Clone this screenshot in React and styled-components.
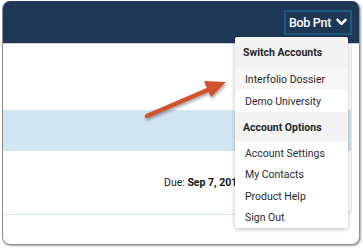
import React from "react";
import styled, { createGlobalStyle } from "styled-components";

const Global = createGlobalStyle`
  html, body { margin: 0; padding: 0; background: #ffffff; }
  body { font-family: Roboto, "Liberation Sans", Arial, sans-serif; }
`;

const Stage = styled.div`
  position: relative;
  width: 363px;
  height: 248px;
  padding: 1px 0 0 2px;
  box-sizing: border-box;
`;

const Window = styled.div`
  width: 358px;
  height: 244px;
  border-radius: 8px;
  overflow: hidden;
  background: #ffffff;
  border: 1px solid #8e8e8e;
  border-top: none;
  box-sizing: border-box;
  box-shadow: 1px 1px 2px rgba(0, 0, 0, 0.35);
  display: flex;
  flex-direction: column;
`;

const Header = styled.header`
  height: 42px;
  flex: none;
  background: #1e3757;
  border-bottom: 1px solid #c9d3dd;
  display: flex;
  align-items: center;
  justify-content: flex-end;
  padding-right: 7px;
`;

const UserButton = styled.div`
  height: 25px;
  box-sizing: border-box;
  border: 2px solid #1c5a82;
  display: flex;
  align-items: center;
  gap: 5px;
  padding: 0 3px 0 3px;
  color: #ffffff;
  font-size: 12.5px;
  font-weight: 500;
  letter-spacing: -0.3px;
`;

const Body = styled.div`
  flex: 1;
  padding: 0 7px 29px 0;
  display: flex;
  flex-direction: column;
`;

const Card = styled.div`
  flex: 1;
  margin-left: -12px;
  border: 1px solid #d6e7f3;
  border-top: none;
  border-radius: 0 0 6px 6px;
  display: flex;
  flex-direction: column;
`;

const Gap = styled.div`
  height: ${p => p.h}px;
  flex: none;
`;

const Band = styled.div`
  height: 41px;
  flex: none;
  background: #d1e5f3;
`;

const DueRow = styled.div`
  padding-left: 172px;
  font-size: 10.5px;
  color: #222;
  white-space: nowrap;
  line-height: 14px;
  b { font-weight: 700; color: #111; }
`;

const Menu = styled.div`
  position: absolute;
  left: 235px;
  top: 37px;
  width: 113px;
  background: #ffffff;
  border-radius: 3px;
  box-shadow: 0 1px 4px rgba(0, 0, 0, 0.28);
  overflow: hidden;
  font-size: 10.5px;
  color: #2b2b2b;
`;

const MenuHead = styled.div`
  height: ${p => p.h}px;
  display: flex;
  align-items: center;
  padding-left: 8px;
  background: #f3f3f3;
  font-weight: 700;
  color: #262626;
`;

const MenuItem = styled.div`
  height: ${p => p.h || 21.5}px;
  display: flex;
  align-items: center;
  padding-left: 10px;
  background: ${p => (p.active ? "#f7f7f7" : "#ffffff")};
`;

const Arrow = styled.svg`
  position: absolute;
  left: 0;
  top: 0;
  overflow: visible;
  filter: drop-shadow(1px 2px 1.5px rgba(0, 0, 0, 0.35));
`;

function Chevron() {
  return (
    <svg width="11" height="8" viewBox="0 0 11 8">
      <path d="M1.5 1.8 L5.5 5.8 L9.5 1.8" fill="none" stroke="#ffffff" strokeWidth="2.6" strokeLinecap="round" strokeLinejoin="round" />
    </svg>
  );
}

export default function App() {
  return (
    <>
      <Global />
      <Stage>
        <Window>
          <Header>
            <UserButton>
              <span>Bob Pnt</span>
              <Chevron />
            </UserButton>
          </Header>
          <Body>
            <Card>
              <Gap h={66} />
              <Band />
              <Gap h={25} />
              <DueRow>
                Due: <b>Sep 7, 2018</b>
              </DueRow>
            </Card>
          </Body>
        </Window>
        <Arrow width="363" height="248" viewBox="0 0 363 248">
          <line x1="147" y1="116" x2="210" y2="89" stroke="#d2522b" strokeWidth="4.5" strokeLinecap="round" />
          <polygon points="226,82 204,81 211,97" fill="#d2522b" />
        </Arrow>
        <Menu>
          <MenuHead h={31}>Switch Accounts</MenuHead>
          <MenuItem active h={22}>Interfolio Dossier</MenuItem>
          <MenuItem h={22}>Demo University</MenuItem>
          <MenuHead h={30}>Account Options</MenuHead>
          <MenuItem h={22}>Account Settings</MenuItem>
          <MenuItem h={21}>My Contacts</MenuItem>
          <MenuItem h={22}>Product Help</MenuItem>
          <MenuItem h={21}>Sign Out</MenuItem>
        </Menu>
      </Stage>
    </>
  );
}
